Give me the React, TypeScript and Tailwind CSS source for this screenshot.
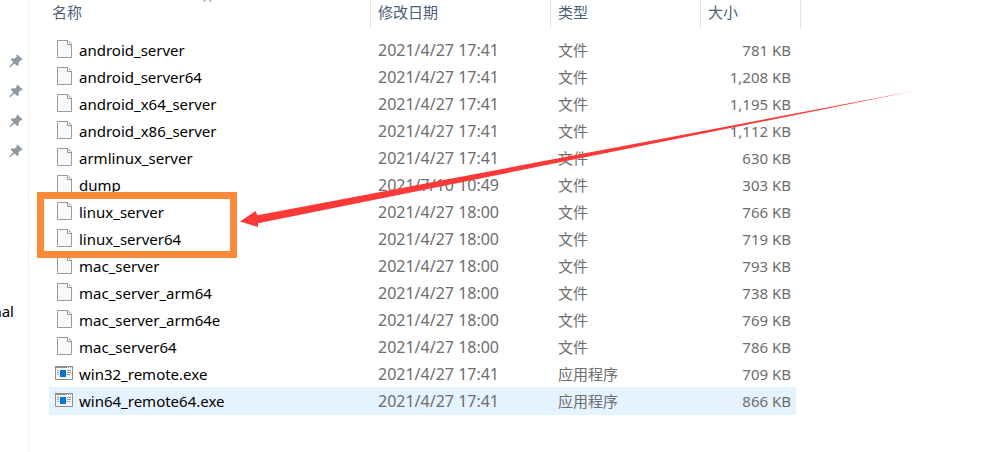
type FileKind = "file" | "app";

interface Entry {
  name: string;
  date: string;
  kind: FileKind;
  size: string;
  active?: boolean;
}

const entries: Entry[] = [
  { name: "android_server", date: "2021/4/27 17:41", kind: "file", size: "781 KB" },
  { name: "android_server64", date: "2021/4/27 17:41", kind: "file", size: "1,208 KB" },
  { name: "android_x64_server", date: "2021/4/27 17:41", kind: "file", size: "1,195 KB" },
  { name: "android_x86_server", date: "2021/4/27 17:41", kind: "file", size: "1,112 KB" },
  { name: "armlinux_server", date: "2021/4/27 17:41", kind: "file", size: "630 KB" },
  { name: "dump", date: "2021/7/10 10:49", kind: "file", size: "303 KB" },
  { name: "linux_server", date: "2021/4/27 18:00", kind: "file", size: "766 KB" },
  { name: "linux_server64", date: "2021/4/27 18:00", kind: "file", size: "719 KB" },
  { name: "mac_server", date: "2021/4/27 18:00", kind: "file", size: "793 KB" },
  { name: "mac_server_arm64", date: "2021/4/27 18:00", kind: "file", size: "738 KB" },
  { name: "mac_server_arm64e", date: "2021/4/27 18:00", kind: "file", size: "769 KB" },
  { name: "mac_server64", date: "2021/4/27 18:00", kind: "file", size: "786 KB" },
  { name: "win32_remote.exe", date: "2021/4/27 17:41", kind: "app", size: "709 KB" },
  { name: "win64_remote64.exe", date: "2021/4/27 17:41", kind: "app", size: "866 KB", active: true },
];

function FileIcon() {
  return (
    <svg width="15" height="18" viewBox="0 0 15 18" aria-hidden="true">
      <path d="M.5.5H11L14.5 4V17.5H.5Z" fill="#f8f9f9" stroke="#9a9a9a" />
      <path d="M10.5.5V4.5H14.5" fill="#fff" stroke="#8f8f8f" />
      <path d="M12 2h1v1h-1z" fill="#9a9a9a" />
    </svg>
  );
}

function AppIcon() {
  return (
    <svg width="18" height="14" viewBox="0 0 18 14" aria-hidden="true">
      <path d="M.5.5H17.5V13.5H.5Z" fill="#f6f6f6" stroke="#8a8f92" />
      <path d="M0 0H18V2H0Z" fill="#8a8f92" />
      <path d="M12 1h1v1h-1zM14 1h1v1h-1zM16 1h1v1h-1z" fill="#fff" />
      <path d="M5 4h6v7H5z" fill="#0078d7" />
      <path d="M2 4.5h2M2 6.5h2M2 8.5h2M12 4.5h4M12 6.5h4M12 8.5h3" stroke="#9a9fa2" />
    </svg>
  );
}

function PinIcon() {
  return (
    <svg width="14" height="14" viewBox="0 0 14 14" fill="#8d9aa3" aria-hidden="true">
      <path d="M8.3 .5L13.5 5.2L12.5 6.5L11.5 6.2L9.6 8.5L9.8 11L8.4 12.2L5.5 9.6L1 13.4L.4 12.6L4.3 8.2L1.8 5.7L3 4.3L5.6 4.4L8 2.5L7.2 1.5Z" />
    </svg>
  );
}

function Heading({ children, className = "" }: { children?: string; className?: string }) {
  return (
    <th scope="col" className="h-9 p-0 text-left align-top font-normal">
      <div className={`h-7 leading-6 text-[#4c607a] ${className}`}>{children}</div>
    </th>
  );
}

function Row({ entry }: { entry: Entry }) {
  const cell = entry.active ? "h-7 bg-[#e5f3ff] p-0" : "h-[27px] p-0";
  return (
    <tr>
      <td className={cell}>
        <div className="flex items-center gap-1 pl-1 text-black">
          <span className="flex h-6 w-[22px] items-center justify-center pb-0.5">
            {entry.kind === "app" ? <AppIcon /> : <FileIcon />}
          </span>
          <span>{entry.name}</span>
        </div>
      </td>
      <td className={`${cell} pl-[7px]! text-base`}>{entry.date}</td>
      <td className={`${cell} pl-[7px]!`}>{entry.kind === "app" ? "应用程序" : "文件"}</td>
      <td className={`${cell} pr-[5px]! text-right`}>{entry.size}</td>
      <td className="p-0" />
    </tr>
  );
}

export default function App() {
  return (
    <div className="flex min-h-screen overflow-hidden bg-white font-['Noto_Sans','Noto_Sans_CJK_SC',sans-serif] text-[15px] leading-6 text-[#6d6d6d]">
      <aside className="flex w-[29px] shrink-0 flex-col items-end overflow-hidden border-r border-[#f1f1f1] pt-[54px] text-black">
        <ul className="flex flex-col gap-4 pr-[5px]">
          {["a", "b", "c", "d"].map((id) => (
            <li key={id}>
              <PinIcon />
            </li>
          ))}
        </ul>
        <span className="mt-[141px] pr-3.5">nal</span>
      </aside>

      <main className="relative min-w-0 flex-1 pl-5">
        <table className="w-[752px] table-fixed border-separate border-spacing-0">
          <colgroup>
            <col className="w-[322px]" />
            <col className="w-[180px]" />
            <col className="w-[150px]" />
            <col className="w-[95px]" />
            <col className="w-[5px]" />
          </colgroup>
          <thead>
            <tr>
              <Heading className="border-r border-[#e2e2e2] pl-[3px]">名称</Heading>
              <Heading className="border-r border-[#e2e2e2] pl-[7px]">修改日期</Heading>
              <Heading className="border-r border-[#e2e2e2] pl-[7px]">类型</Heading>
              <Heading className="pl-[7px]">大小</Heading>
              <Heading className="border-r border-[#e2e2e2]" />
            </tr>
          </thead>
          <tbody>
            {entries.map((entry) => (
              <Row key={entry.name} entry={entry} />
            ))}
          </tbody>
        </table>

        {/* Sort direction marker, clipped by the top edge of the window */}
        <svg className="absolute top-0 left-[174px]" width="9" height="2" viewBox="0 0 9 2" aria-hidden="true">
          <path d="M.5 2L3 -.5M8.5 2L6 -.5" stroke="#6d6d6d" fill="none" />
        </svg>

        {/* Highlight around the two linux servers and the arrow that points at it */}
        <div className="pointer-events-none absolute top-[192px] left-2 h-[66px] w-[200px] border-[7px] border-[#f88a3a]" />
        <svg
          className="pointer-events-none absolute top-[90px] left-[211px]"
          width="676"
          height="140"
          viewBox="240 90 676 140"
          aria-hidden="true"
        >
          <path d="M240 221.5L255.5 211L257.5 215.3L914 91L258 223.2V227Z" fill="#fb3a38" />
        </svg>
      </main>
    </div>
  );
}
